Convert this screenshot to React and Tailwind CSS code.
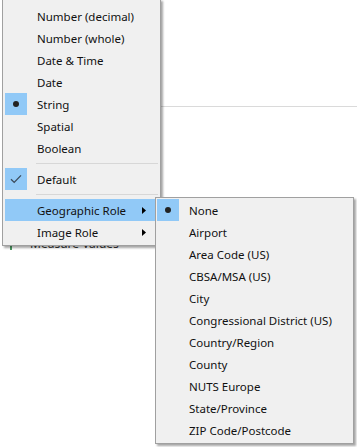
import React from "react";

const typeItems = [
  { label: "Number (decimal)" },
  { label: "Number (whole)" },
  { label: "Date & Time" },
  { label: "Date" },
  { label: "String", mark: "dot" },
  { label: "Spatial" },
  { label: "Boolean" },
];

const geoRoles = [
  "None",
  "Airport",
  "Area Code (US)",
  "CBSA/MSA (US)",
  "City",
  "Congressional District (US)",
  "Country/Region",
  "County",
  "NUTS Europe",
  "State/Province",
  "ZIP Code/Postcode",
];

const Dot = () => <span className="block h-[6px] w-[6px] rounded-full bg-[#222]"></span>;

const Check = () => (
  <svg width="12" height="10" viewBox="0 0 12 10" fill="none">
    <path d="M1 5.2 L4.2 8.4 L11 1.4" stroke="#3b4a5a" strokeWidth="1.3" />
  </svg>
);

const Arrow = () => (
  <svg width="4" height="7" viewBox="0 0 4 7">
    <path d="M0 0 L4 3.5 L0 7 Z" fill="#000" />
  </svg>
);

const Row = ({ label, mark, highlight, arrow }) => (
  <div className={`flex h-[22px] items-center ${highlight ? "bg-[#91c9f7]" : ""}`}>
    <span
      className={`flex h-[22px] w-[22px] shrink-0 items-center justify-center ${
        mark ? "bg-[#91c9f7]" : ""
      }`}
    >
      {mark === "dot" && <Dot />}
      {mark === "check" && <Check />}
    </span>
    <span className="ml-[10px] flex-1 whitespace-nowrap pt-[2px]">{label}</span>
    {arrow && (
      <span className="mr-[12px] flex items-center">
        <Arrow />
      </span>
    )}
  </div>
);

const Separator = () => (
  <div className="flex h-[9px] items-center pl-[31px]">
    <div className="h-px w-full bg-[#d7d7d7]"></div>
  </div>
);

export default function App() {
  return (
    <div
      className="relative h-[447px] w-[357px] overflow-hidden bg-white text-[11.5px] leading-none text-[#111]"
      style={{ fontFamily: '"Noto Sans", "Open Sans", sans-serif' }}
    >
      {/* page behind the menus */}
      <div className="absolute left-[161px] right-0 top-[106px] h-px bg-[#dadada]"></div>
      <div className="absolute left-[10px] top-[238px] flex items-center gap-[18px] text-[#333]">
        <span className="block h-[12px] w-[2px] bg-[#4c9a63]"></span>
        <span className="text-[12px]">Measure Values</span>
      </div>

      {/* main context menu */}
      <div className="absolute left-[2px] top-[-1px] w-[159px] border border-[#a0a0a0] bg-[#f0f0f0] px-[2px] pb-[2px] pt-[5px] shadow-[2px_2px_2px_rgba(0,0,0,0.35)]">
        {typeItems.map((it) => (
          <Row key={it.label} label={it.label} mark={it.mark} />
        ))}
        <Separator />
        <Row label="Default" mark="check" />
        <Separator />
        <Row label="Geographic Role" highlight arrow />
        <Row label="Image Role" arrow />
      </div>

      {/* geographic role submenu */}
      <div className="absolute left-[155px] top-[197px] w-[199px] border border-[#a0a0a0] bg-[#f0f0f0] px-px pb-[2px] pt-px shadow-[2px_2px_2px_rgba(0,0,0,0.35)]">
        {geoRoles.map((r, i) => (
          <Row key={r} label={r} mark={i === 0 ? "dot" : undefined} />
        ))}
      </div>
    </div>
  );
}
